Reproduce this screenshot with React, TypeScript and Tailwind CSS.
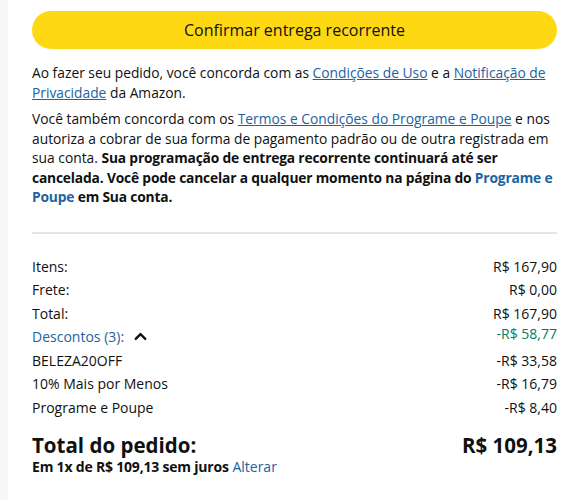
import { ChevronUp } from 'lucide-react';

const rows = [
    { label: 'Itens:', value: 'R$ 167,90' },
    { label: 'Frete:', value: 'R$ 0,00' },
    { label: 'Total:', value: 'R$ 167,90' },
];

const discounts = [
    { label: 'BELEZA20OFF', value: '-R$ 33,58' },
    { label: '10% Mais por Menos', value: '-R$ 16,79' },
    { label: 'Programe e Poupe', value: '-R$ 8,40' },
];

export default function App() {
    return (
        <div className="flex min-h-[500px] bg-white text-[#0f1111]" style={{ fontFamily: '"Open Sans", "Noto Sans", sans-serif' }}>
            <div className="w-[8px] shrink-0 bg-[#f7f7f7]" />
            <div className="flex-1 pl-[24px] pr-[8px] pt-[11px]">
                <button className="w-full h-[38px] rounded-full bg-[#ffd814] text-[16px] leading-none">
                    Confirmar entrega recorrente
                </button>

                <p className="mt-[14px] text-[13.8px] leading-[19.5px]">
                    Ao fazer seu pedido, você concorda com as{' '}
                    <a className="text-[#2162a1] underline">Condições de Uso</a> e a{' '}
                    <a className="text-[#2162a1] underline">Notificação de Privacidade</a> da Amazon.
                </p>

                <p className="mt-[7px] text-[13.8px] leading-[19.5px]">
                    Você também concorda com os{' '}
                    <a className="text-[#2162a1] underline">Termos e Condições do Programe e Poupe</a> e nos
                    autoriza a cobrar de sua forma de pagamento padrão ou de outra registrada em sua conta.{' '}
                    <b className="tracking-[-0.18px]">
                        Sua programação de entrega recorrente continuará até ser cancelada. Você pode cancelar a
                        qualquer momento na página do <span className="text-[#2162a1]">Programe e Poupe</span> em Sua
                        conta.
                    </b>
                </p>

                <div className="mt-[25px] h-[2px] bg-[#e3e6e6]" />

                <div className="mt-[21px] flex flex-col text-[14px] leading-[23.5px]">
                    {rows.map((r) => (
                        <div key={r.label} className="flex justify-between">
                            <span>{r.label}</span>
                            <span>{r.value}</span>
                        </div>
                    ))}
                    <div className="flex justify-between">
                        <span className="flex items-center gap-[7px] text-[#2162a1]">
                            Descontos (3):
                            <ChevronUp className="w-[19px] h-[19px] text-[#0f1111]" strokeWidth={3} />
                        </span>
                        <span className="text-[#067d62] -mt-[3px]">-R$ 58,77</span>
                    </div>
                    {discounts.map((r) => (
                        <div key={r.label} className="flex justify-between">
                            <span>{r.label}</span>
                            <span>{r.value}</span>
                        </div>
                    ))}
                </div>

                <div className="mt-[13px] flex justify-between text-[20.5px] font-bold leading-[26px]">
                    <span>Total do pedido:</span>
                    <span>R$ 109,13</span>
                </div>
                <p className="text-[14px] leading-[18px]">
                    <b className="tracking-[-0.2px]">Em 1x de R$ 109,13 sem juros</b>{' '}
                    <a className="text-[#2162a1]">Alterar</a>
                </p>
            </div>
        </div>
    );
}
